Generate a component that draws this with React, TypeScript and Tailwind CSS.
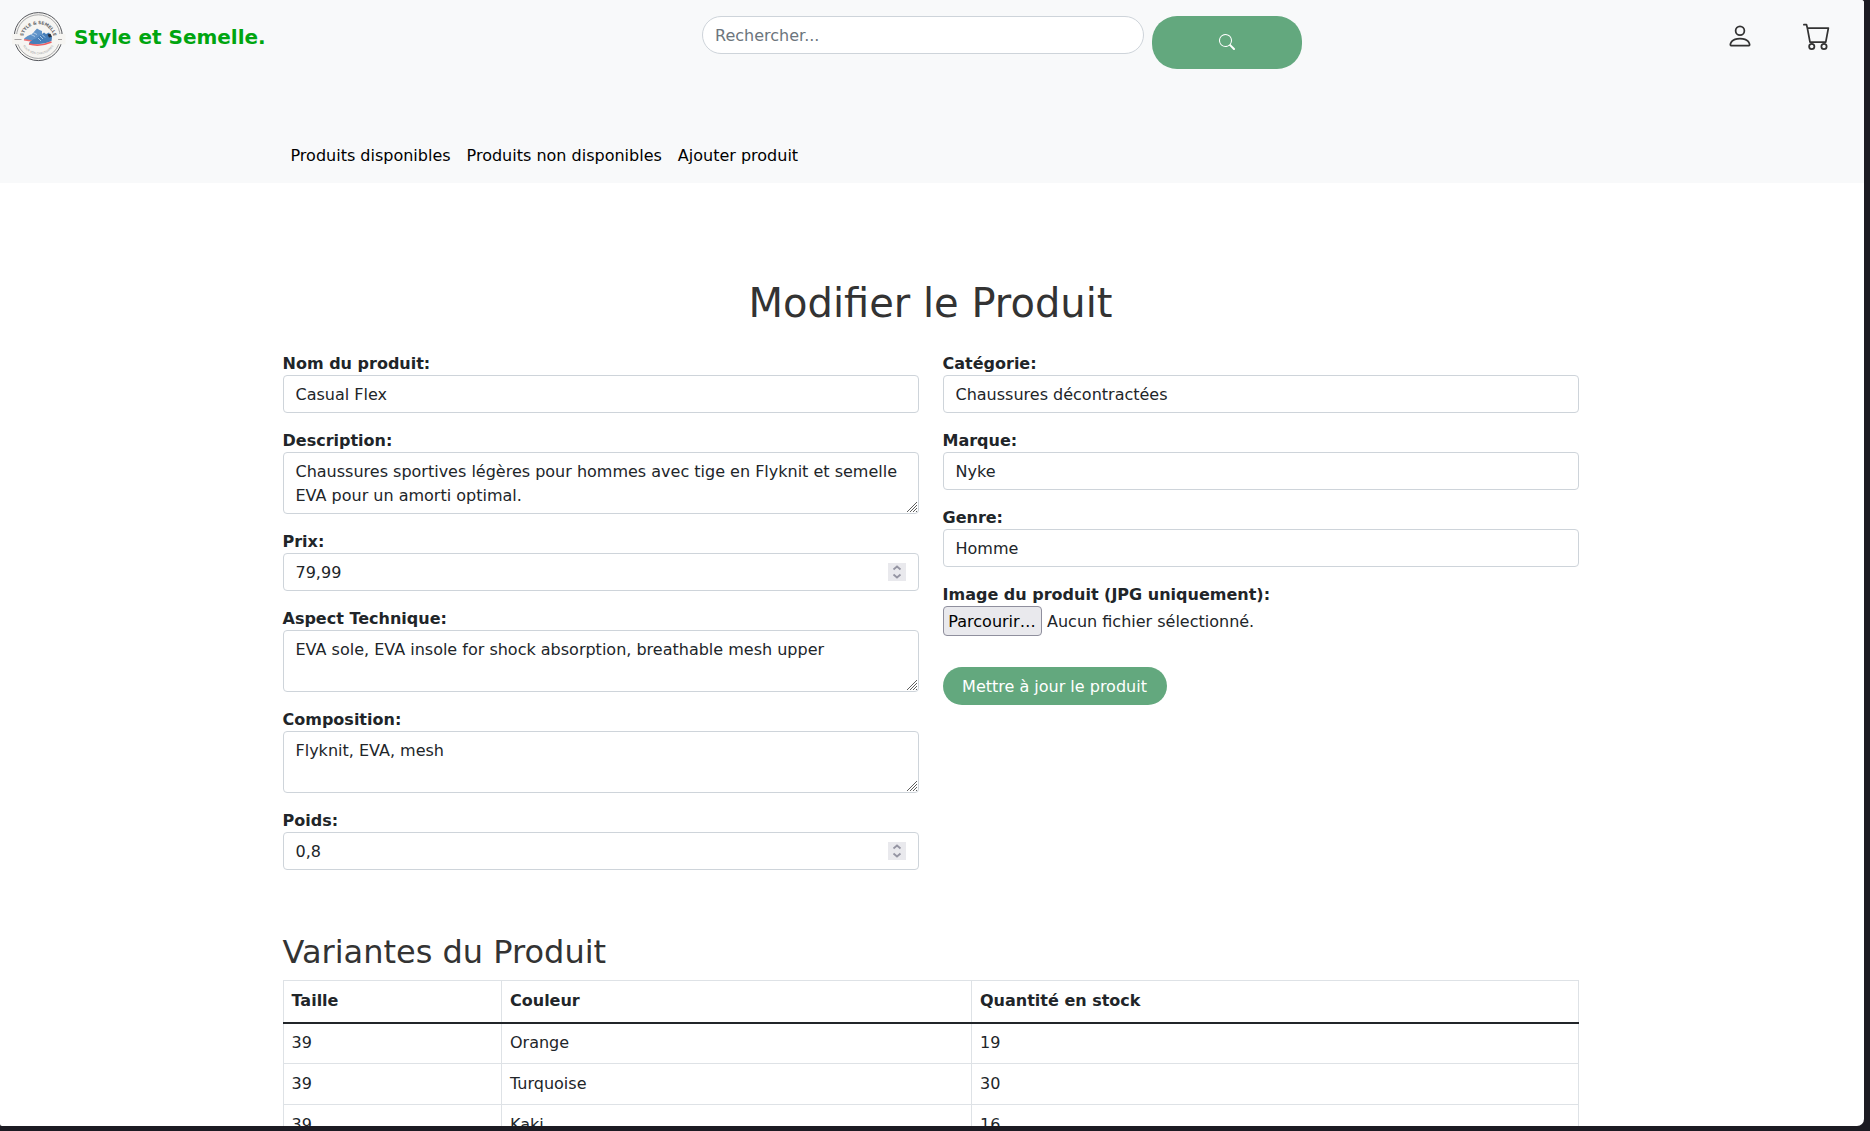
import type { ReactNode } from "react";
import { BsCart, BsPerson, BsSearch } from "react-icons/bs";

function Logo() {
  return (
    <svg className="h-[52px] w-[54px]" viewBox="0 0 54 52">
      <circle cx="26.300" cy="25.600" r="24" fill="#f6f5f2" stroke="#55575c" strokeWidth="1" />
      <circle cx="26.300" cy="25.600" r="21.800" fill="none" stroke="#85868a" strokeWidth="0.7" />
      <rect x="0" y="23" width="53.500" height="10.300" fill="#f6f5f2" />
      <path d="M2.500 28.500h7M46 28.500h4" stroke="#a8a5a5" strokeWidth="1" />
      <defs>
        <path id="arc-top" d="M10.800 27a15.600 15.600 0 0 1 31 0" />
        <path id="arc-bottom" d="M9 31a18.300 18.300 0 0 0 34.600 0" />
      </defs>
      <text fontSize="4.4" fontWeight="bold" fill="#66676a" textAnchor="middle">
        <textPath href="#arc-top" startOffset="50%" textLength="42" lengthAdjust="spacing">
          STYLE &amp; SEMELLE
        </textPath>
      </text>
      <text fontSize="2.8" fill="#9a9b9c" textAnchor="middle">
        <textPath href="#arc-bottom" startOffset="50%" textLength="36" lengthAdjust="spacing">
          POUR VOS CHAUSSURES
        </textPath>
      </text>
      <path d="M12 27.500q3-3 8-4.500l5-5.500 2.500 1.500 2.500 1v5l-8 4.500-8-.500z" fill="#5f93c8" />
      <path d="M12 28.800l8 1.200" stroke="#ee6d70" strokeWidth="1.400" />
      <path d="M17 32q3-4 7-4.500l8-6 2 1.500 3-1.500 3 5-.500 3.500q-9 4-22.500 3z" fill="#467fba" />
      <path d="M35.500 23.500l3-.800 1.500 3-3 .800z" fill="#263142" />
      <path d="M17 33q11 3 22.500-2" fill="none" stroke="#ee5f63" strokeWidth="1.500" />
      <path d="M19 23.500l4 2M21 21.500l4 2M26 27l3 3M28 25l3 3M30 23.500l3 3" stroke="#c3d9ed" strokeWidth="0.8" />
    </svg>
  );
}

function Field({ label, children }: { label: string; children: ReactNode }) {
  return (
    <div className="mb-[15px]">
      <label className="block h-6 pt-px font-bold">{label}</label>
      {children}
    </div>
  );
}

const control =
  "block w-full rounded-[4px] border border-[#ced4da] bg-white px-3 pb-[5px] pt-[7px] leading-6 text-[#212529] outline-none";

function TextInput({ value }: { value: string }) {
  return <input className={control} defaultValue={value} />;
}

function NumberInput({ value }: { value: string }) {
  return (
    <div className="relative">
      <input className={control} defaultValue={value} />
      <svg className="absolute right-[13px] top-[10px] h-[18px] w-[18px] bg-[#e9e9ed]" viewBox="0 0 18 18">
        <path d="M5.500 6.500l3.500-3 3.500 3M5.500 11.500l3.500 3 3.500-3" fill="none" stroke="#9595a3" strokeWidth="1.800" />
      </svg>
    </div>
  );
}

function TextArea({ value }: { value: string }) {
  return (
    <div className="relative">
      <textarea className={control + " h-[62px] resize-none overflow-hidden"} defaultValue={value} />
      <svg className="absolute bottom-[2px] right-[2px] h-[10px] w-[10px]" viewBox="0 0 10 10">
        <path d="M0 10L10 0M3 10l7-7M6 10l4-4M9 10l1-1" stroke="#5f5f5f" strokeWidth="1" />
      </svg>
    </div>
  );
}

const variants = [
  ["39", "Orange", "19"],
  ["39", "Turquoise", "30"],
  ["39", "Kaki", "16"],
];

export default function App() {
  return (
    <div className="h-[1131px] w-[1870px] overflow-hidden bg-[#1c1b22] font-['DejaVu_Sans',sans-serif] text-base leading-6 text-[#212529]">
      <div className="h-[1126px] w-[1864px] overflow-hidden rounded-br-[7px] rounded-bl-[2px] rounded-tr-[3px] bg-white">
        <header className="h-[183px] bg-[#f8f9fa]">
          <div className="flex h-[140px] items-start">
            <div className="flex w-[702px] items-center pl-3 pt-[11px]">
              <Logo />
              <span className="ml-2 text-xl font-bold leading-[30px] text-[#00a510]">Style et Semelle.</span>
            </div>
            <div className="flex items-start gap-2 pt-4">
              <input
                className="h-[38px] w-[442px] rounded-[20px] border border-[#ced4da] bg-white px-3 outline-none placeholder:text-[#6c757d]"
                placeholder="Rechercher..."
              />
              <button className="flex h-[53px] w-[150px] items-center justify-center rounded-[25px] bg-[#63a87e] pb-[1px] text-white">
                <BsSearch size={16} />
              </button>
            </div>
            <div className="ml-auto flex items-center gap-[49px] pr-[33px] pt-[22px]">
              <BsPerson size={28} color="#333" />
              <BsCart size={28} color="#333" />
            </div>
          </div>
          <nav className="flex h-8 items-center gap-4 pl-[290.500px] text-black">
            <a>Produits disponibles</a>
            <a>Produits non disponibles</a>
            <a>Ajouter produit</a>
          </nav>
        </header>

        <main className="ml-[282.500px] w-[1296px]">
          <h1 className="pt-[96px] text-center text-[40px] leading-[48px] text-[#333]">Modifier le Produit</h1>
          <div className="mt-6 grid grid-cols-2 gap-6">
            <div>
              <Field label="Nom du produit:">
                <TextInput value="Casual Flex" />
              </Field>
              <Field label="Description:">
                <TextArea value="Chaussures sportives légères pour hommes avec tige en Flyknit et semelle EVA pour un amorti optimal." />
              </Field>
              <Field label="Prix:">
                <NumberInput value="79,99" />
              </Field>
              <Field label="Aspect Technique:">
                <TextArea value="EVA sole, EVA insole for shock absorption, breathable mesh upper" />
              </Field>
              <Field label="Composition:">
                <TextArea value="Flyknit, EVA, mesh" />
              </Field>
              <Field label="Poids:">
                <NumberInput value="0,8" />
              </Field>
            </div>
            <div>
              <Field label="Catégorie:">
                <TextInput value="Chaussures décontractées" />
              </Field>
              <Field label="Marque:">
                <TextInput value="Nyke" />
              </Field>
              <Field label="Genre:">
                <TextInput value="Homme" />
              </Field>
              <Field label="Image du produit (JPG uniquement):">
                <div className="flex h-[30px] items-center gap-[5.500px]">
                  <button className="h-[30px] w-[99px] whitespace-nowrap rounded-[4px] border border-[#8f8f9d] bg-[#e9e9ed] pt-px text-black">
                    Parcourir…
                  </button>
                  <span className="pt-px">Aucun fichier sélectionné.</span>
                </div>
              </Field>
              <button className="mt-4 h-[38px] w-[224px] whitespace-nowrap rounded-[20px] bg-[#63a87e] pt-px text-white">
                Mettre à jour le produit
              </button>
            </div>
          </div>
          <h2 className="mt-12 text-[32px] leading-[38px] text-[#333]">Variantes du Produit</h2>
          <table className="mt-[9px] w-full table-fixed border-collapse border border-[#dee2e6] text-left">
            <colgroup>
              <col className="w-[218.500px]" />
              <col className="w-[470px]" />
              <col />
            </colgroup>
            <thead>
              <tr className="h-[42px] border-b-2 border-[#212529]">
                {["Taille", "Couleur", "Quantité en stock"].map((h) => (
                  <th key={h} className="border-x border-x-[#dee2e6] px-2 py-0 font-bold">
                    {h}
                  </th>
                ))}
              </tr>
            </thead>
            <tbody>
              {variants.map((row) => (
                <tr key={row[1]} className="h-[41px]">
                  {row.map((cell, i) => (
                    <td key={i} className="border-x border-b border-[#dee2e6] px-2 py-0">
                      {cell}
                    </td>
                  ))}
                </tr>
              ))}
            </tbody>
          </table>
        </main>
      </div>
    </div>
  );
}
